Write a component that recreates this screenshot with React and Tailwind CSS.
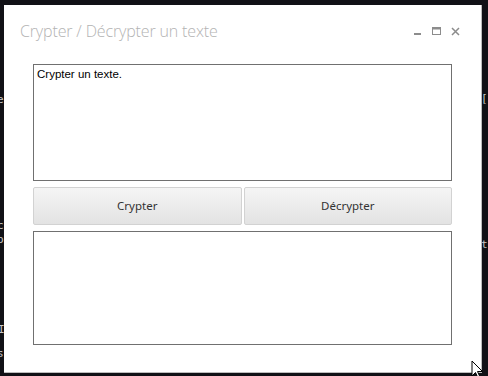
import React from 'react';

const WindowControls = () => (
  <div className="flex items-center gap-[10px] text-[#8c8c8c]">
    {/* minimize */}
    <svg width="9" height="9" viewBox="0 0 9 9">
      <rect x="1" y="6" width="7" height="2" fill="currentColor" />
    </svg>
    {/* maximize */}
    <svg width="9" height="9" viewBox="0 0 9 9">
      <rect x="0.5" y="0.5" width="8" height="7" fill="none" stroke="currentColor" />
      <rect x="0.5" y="0.5" width="8" height="2" fill="currentColor" />
    </svg>
    {/* close */}
    <svg width="9" height="9" viewBox="0 0 9 9">
      <path d="M1 1 L8 8 M8 1 L1 8" stroke="currentColor" strokeWidth="1.5" />
    </svg>
  </div>
);

const ActionButton = ({ label }) => (
  <button className="h-[38px] rounded-[2px] border border-[#d2d2d2] bg-gradient-to-b from-[#f5f5f5] to-[#e3e3e3] text-[11.5px] text-[#333333]">
    {label}
  </button>
);

export default function App() {
  return (
    <div
      className="relative w-[488px] h-[376px] overflow-hidden bg-[#111116]"
      style={{ fontFamily: '"Noto Sans", "Liberation Sans", sans-serif' }}
    >
      {/* terminal text peeking behind the window */}
      <div className="absolute inset-0 text-[11px] text-[#c8c8c8]" style={{ fontFamily: '"DejaVu Sans Mono", monospace' }}>
        <span className="absolute left-[-3px] top-[92px]">e</span>
        <span className="absolute left-[-3px] top-[218px]">c</span>
        <span className="absolute left-[-3px] top-[232px]">p</span>
        <span className="absolute left-[-2px] top-[322px]">I</span>
        <span className="absolute left-[-3px] top-[346px]">s</span>
        <span className="absolute left-[481px] top-[91px]">[</span>
        <span className="absolute left-[481px] top-[237px]">t</span>
      </div>

      {/* dialog window */}
      <div className="absolute left-[4px] top-[5px] w-[478px] h-[368px] bg-white border-r border-b border-[#bdbdbd] flex flex-col">
        <div className="flex items-start justify-between pl-[16px] pr-[21px] pt-[14px] h-[59px]">
          <h1
            className="text-[16px] font-light text-[#b3b3b3] leading-[24px] tracking-[-0.15px]"
            style={{ fontFamily: '"Open Sans", "Noto Sans", sans-serif' }}
          >
            Crypter / Décrypter un texte
          </h1>
          <div className="pt-[8px]">
            <WindowControls />
          </div>
        </div>

        <div className="flex flex-col px-[29px]">
          <div
            className="h-[117px] border border-[#707070] px-[3px] pt-[1px] text-[11.5px] text-black"
            style={{ fontFamily: '"Liberation Sans", sans-serif' }}
          >
            Crypter un texte.
          </div>
          <div className="grid grid-cols-2 gap-[2px] mt-[6px]">
            <ActionButton label="Crypter" />
            <ActionButton label="Décrypter" />
          </div>
          <div className="h-[114px] border border-[#707070] mt-[6px]" />
        </div>
      </div>

      {/* mouse pointer */}
      <svg className="absolute left-[471px] top-[360px]" width="14" height="20" viewBox="0 0 14 20">
        <path d="M1 1 L1 16 L4.5 12.5 L7 18 L9 17 L6.5 11.5 L11.5 11.5 Z" fill="white" stroke="black" strokeWidth="1" />
      </svg>
    </div>
  );
}
